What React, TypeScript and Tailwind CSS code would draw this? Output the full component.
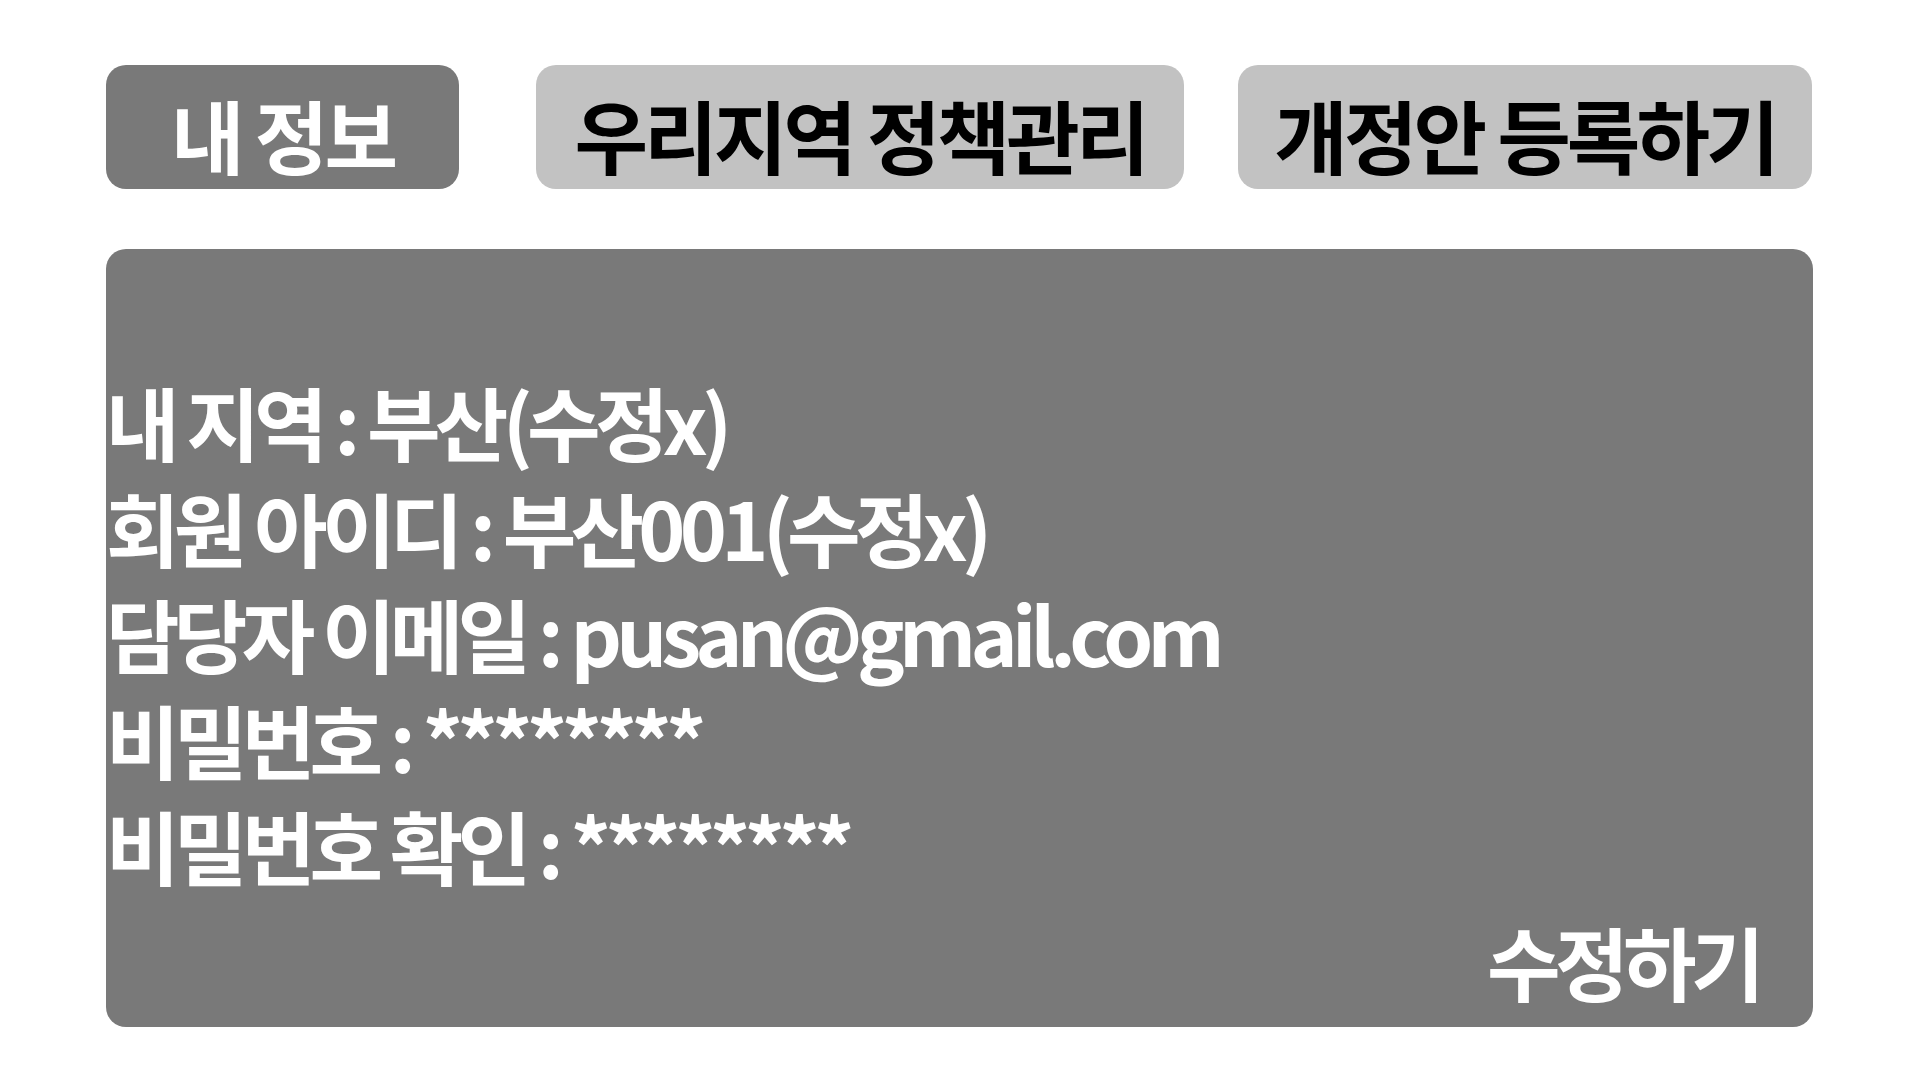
import React from "react";

const font = {
  fontFamily: '"Noto Sans CJK KR", "Noto Sans", sans-serif',
};

const rows = [
  "내 지역 : 부산(수정x)",
  "회원 아이디 : 부산001(수정x)",
  "담당자 이메일 : pusan@gmail.com",
  "비밀번호 : ********",
  "비밀번호 확인 : ********",
];

const Tab = ({
  label,
  active,
  className,
}: {
  label: string;
  active?: boolean;
  className: string;
}) => (
  <button
    type="button"
    className={`h-[124px] pt-[12px] rounded-[20px] flex items-center justify-center text-[80px] font-bold tracking-[-0.05em] ${
      active ? "bg-[#797979] text-white" : "bg-[#c2c2c2] text-black"
    } ${className}`}
  >
    {label}
  </button>
);

export default function App() {
  return (
    <div className="min-h-screen bg-white pl-[106px] pt-[65px]" style={font}>
      <div className="flex">
        <Tab label="내 정보" active className="w-[353px]" />
        <Tab label="우리지역 정책관리" className="w-[648px] ml-[77px]" />
        <Tab label="개정안 등록하기" className="w-[574px] ml-[54px]" />
      </div>

      <div className="mt-[60px] w-[1707px] h-[778px] rounded-[20px] bg-[#797979] text-white font-bold flex flex-col pt-[118px] pr-[54px]">
        {rows.map((r) => (
          <div
            key={r}
            className="text-[80px] leading-[106px] tracking-[-0.072em] whitespace-nowrap"
          >
            {r}
          </div>
        ))}
        <div className="self-end mt-[10px] text-[80px] leading-[106px] tracking-[-0.07em]">
          수정하기
        </div>
      </div>
    </div>
  );
}
